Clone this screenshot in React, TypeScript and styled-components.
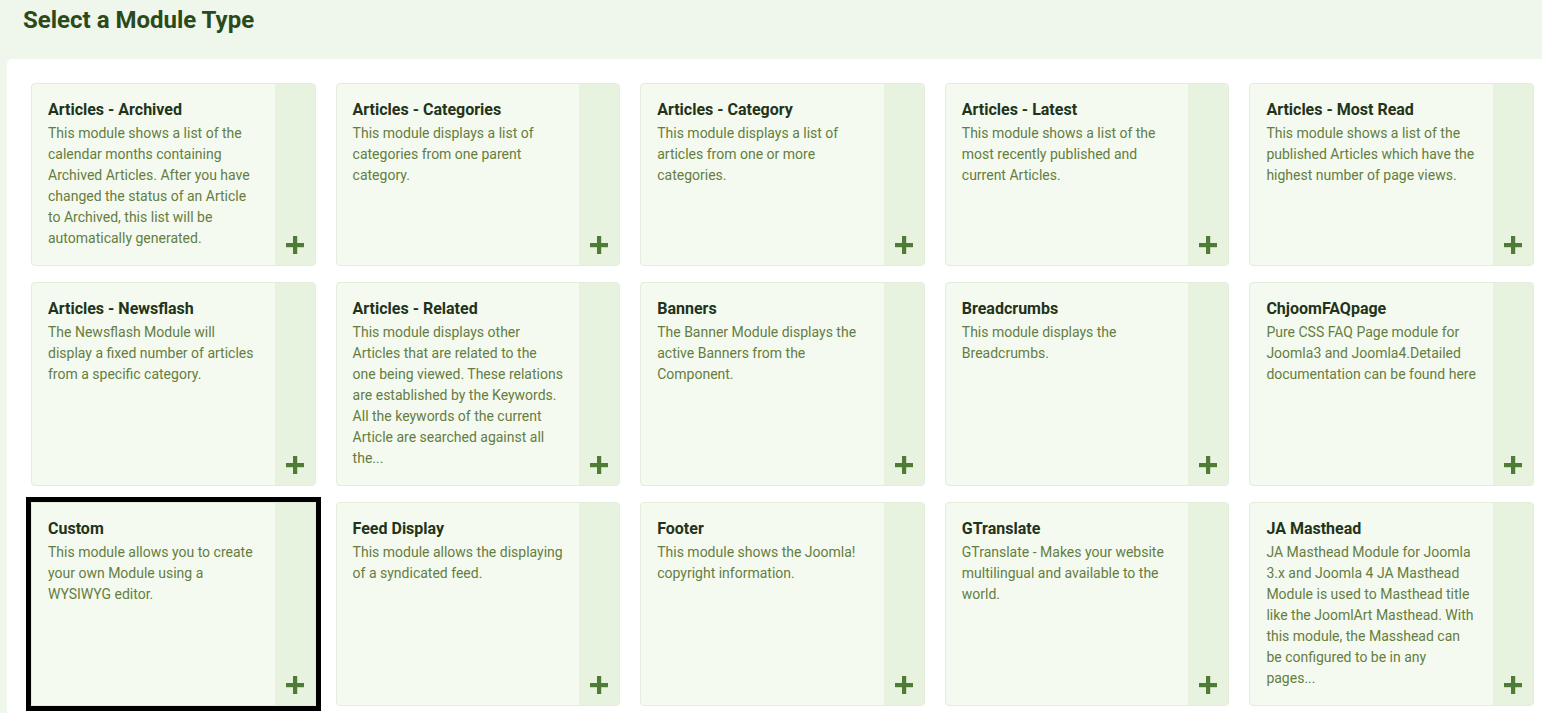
import React from "react";
import styled, { createGlobalStyle } from "styled-components";

const GlobalStyle = createGlobalStyle`
  html, body {
    margin: 0;
    padding: 0;
    background: #eff6eb;
  }
  body {
    font-family: Roboto, "Liberation Sans", Arial, sans-serif;
    overflow: hidden;
  }
`;

const Page = styled.div`
  width: 100vw;
  height: 100vh;
  overflow: hidden;
  background: #eff6eb;
`;

const Header = styled.header`
  height: 59px;
  box-sizing: border-box;
  padding: 6px 23px 0;
`;

const Title = styled.h1`
  margin: 0;
  font-size: 24px;
  line-height: 28px;
  font-weight: 700;
  color: #2a4a1c;
`;

const Panel = styled.main`
  margin-left: 7px;
  width: 1551px;
  box-sizing: border-box;
  padding: 24px;
  background: #ffffff;
  border-radius: 5px 0 0 0;
`;

const Grid = styled.div`
  display: grid;
  grid-template-columns: repeat(5, 1fr);
  gap: 16px 20px;
`;

const Card = styled.button<{ $focused?: boolean }>`
  all: unset;
  box-sizing: border-box;
  display: flex;
  align-items: stretch;
  background: #f4faf0;
  border: 1px solid #e2eedb;
  border-radius: ${(p) => (p.$focused ? "0" : "4px")};
  overflow: hidden;
  cursor: pointer;
  outline: ${(p) => (p.$focused ? "5px solid #000" : "none")};
`;

const Body = styled.div`
  flex: 1;
  min-width: 0;
  padding: 16px 16.2px 16px 16px;
`;

const CardTitle = styled.h3`
  margin: 0 0 4px;
  font-size: 16px;
  line-height: 19px;
  font-weight: 700;
  color: #22331a;
`;

const Desc = styled.p`
  margin: 0;
  font-size: 14px;
  line-height: 21px;
  color: #657d41;
`;

const Strip = styled.div`
  width: 40px;
  flex: none;
  background: #e7f3df;
  display: flex;
  align-items: flex-end;
  justify-content: center;
  padding-bottom: 11px;
  box-sizing: border-box;
`;

const PlusIcon = () => (
  <svg width="18" height="18" viewBox="0 0 18 18" aria-hidden="true">
    <rect x="7" y="0" width="4.2" height="18" fill="#4e7b35" />
    <rect x="0" y="7" width="18" height="4.2" fill="#4e7b35" />
  </svg>
);

const modules = [
  {
    t: "Articles - Archived",
    d: "This module shows a list of the calendar months containing Archived Articles. After you have changed the status of an Article to Archived, this list will be automatically generated.",
  },
  { t: "Articles - Categories", d: "This module displays a list of categories from one parent category." },
  { t: "Articles - Category", d: "This module displays a list of articles from one or more categories." },
  { t: "Articles - Latest", d: "This module shows a list of the most recently published and current Articles." },
  {
    t: "Articles - Most Read",
    d: "This module shows a list of the published Articles which have the highest number of page views.",
  },
  {
    t: "Articles - Newsflash",
    d: "The Newsflash Module will display a fixed number of articles from a specific category.",
  },
  {
    t: "Articles - Related",
    d: "This module displays other Articles that are related to the one being viewed. These relations are established by the Keywords. All the keywords of the current Article are searched against all the...",
  },
  { t: "Banners", d: "The Banner Module displays the active Banners from the Component." },
  { t: "Breadcrumbs", d: "This module displays the Breadcrumbs." },
  {
    t: "ChjoomFAQpage",
    d: "Pure CSS FAQ Page module for Joomla3 and Joomla4.Detailed documentation can be found here",
  },
  {
    t: "Custom",
    d: "This module allows you to create your own Module using a WYSIWYG editor.",
    focused: true,
  },
  { t: "Feed Display", d: "This module allows the displaying of a syndicated feed." },
  { t: "Footer", d: "This module shows the Joomla! copyright information." },
  { t: "GTranslate", d: "GTranslate - Makes your website multilingual and available to the world." },
  {
    t: "JA Masthead",
    d: "JA Masthead Module for Joomla 3.x and Joomla 4 JA Masthead Module is used to Masthead title like the JoomlArt Masthead. With this module, the Masshead can be configured to be in any pages...",
  },
];

export default function App() {
  return (
    <Page>
      <GlobalStyle />
      <Header>
        <Title>Select a Module Type</Title>
      </Header>
      <Panel>
        <Grid>
          {modules.map((m) => (
            <Card key={m.t} $focused={m.focused}>
              <Body>
                <CardTitle>{m.t}</CardTitle>
                <Desc>{m.d}</Desc>
              </Body>
              <Strip>
                <PlusIcon />
              </Strip>
            </Card>
          ))}
        </Grid>
      </Panel>
    </Page>
  );
}
